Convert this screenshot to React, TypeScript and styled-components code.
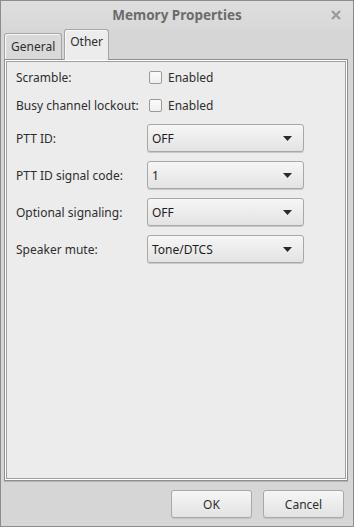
import React from 'react';
import styled, { createGlobalStyle } from 'styled-components';

const Global = createGlobalStyle`
	html, body {
		margin: 0;
		padding: 0;
		background: #d6d6d6;
	}
	body {
		font-family: 'Noto Sans', 'DejaVu Sans', sans-serif;
		font-size: 12px;
		color: #2e2e2e;
	}
`;

const Window = styled.div`
	box-sizing: border-box;
	width: 354px;
	height: 527px;
	border: 1px solid #8c8c8c;
	background: #d6d6d6;
	display: flex;
	flex-direction: column;
`;

const TitleBar = styled.div`
	height: 28px;
	position: relative;
	display: flex;
	align-items: center;
	justify-content: center;
	background: linear-gradient(#dedede, #d8d8d8);
	font-size: 13.5px;
	font-weight: bold;
	color: #6b6b6b;
`;

const Close = styled.span`
	position: absolute;
	right: 12px;
	top: 9px;
	display: flex;
`;

const Body = styled.div`
	flex: 1;
	display: flex;
	flex-direction: column;
	padding: 0 5px 0 3px;
`;

const Tabs = styled.div`
	display: flex;
	align-items: flex-end;
	gap: 2px;
	height: 30px;
`;

const Tab = styled.div<{ $active?: boolean }>`
	box-sizing: border-box;
	height: ${(p) => (p.$active ? '31px' : '26px')};
	padding: ${(p) => (p.$active ? '3px 5px 0' : '4px 6px 0')};
	border: 1px solid #a6a6a6;
	border-bottom: none;
	border-radius: 3px 3px 0 0;
	background: ${(p) => (p.$active ? '#ececec' : '#d9d9d9')};
	box-shadow: inset 1px 1px 0 #f8f8f8;
	font-size: 12px;
	color: #2e2e2e;
	margin-bottom: ${(p) => (p.$active ? '-1px' : '0')};
	position: relative;
	z-index: ${(p) => (p.$active ? 1 : 0)};
`;

const Panel = styled.div`
	box-sizing: border-box;
	height: 422px;
	border: 1px solid #8e8e8e;
	box-shadow: 0 1px 0 #b4b4b4;
	background: #fff;
	display: flex;
`;

const PanelInner = styled.div`
	flex: 1;
	margin: 1px;
	border: 1px solid #a0a0a0;
	background: #ececec;
	padding: 6px 10px 0 9px;
	display: grid;
	grid-template-columns: 131px 157px;
	grid-auto-rows: min-content;
	row-gap: 9px;
	align-content: start;
`;

const Label = styled.div<{ $h: number }>`
	height: ${(p) => p.$h}px;
	display: flex;
	align-items: center;
	white-space: nowrap;
`;

const CheckRow = styled.label`
	height: 19px;
	display: flex;
	align-items: center;
	gap: 6px;
	padding-left: 2px;
`;

const Box = styled.span`
	box-sizing: border-box;
	width: 13px;
	height: 13px;
	border: 1px solid #9a9a9a;
	border-radius: 2px;
	background: linear-gradient(#fbfbfb, #efefef);
`;

const Combo = styled.div`
	box-sizing: border-box;
	height: 28px;
	border: 1px solid #a8a8a8;
	border-radius: 3px;
	background: linear-gradient(#f6f6f6, #e3e3e3);
	box-shadow: 0 1px 0 #c8c8c8;
	display: flex;
	align-items: center;
	justify-content: space-between;
	padding: 0 11px 0 4px;
	color: #1e1e1e;
`;

const Footer = styled.div`
	flex: 1;
	display: flex;
	justify-content: flex-end;
	align-items: flex-start;
	gap: 11px;
	padding: 9px 4px 0 0;
`;

const Button = styled.button`
	box-sizing: border-box;
	width: 81px;
	height: 28px;
	border: 1px solid #a8a8a8;
	border-radius: 3px;
	background: linear-gradient(#f6f6f6, #e2e2e2);
	box-shadow: 0 1px 0 #c4c4c4;
	font-family: inherit;
	font-size: 12px;
	color: #2e2e2e;
	padding: 0;
`;

const Arrow = () => (
	<svg width="9" height="5" viewBox="0 0 9 5">
		<path d="M0 0h9L4.5 5z" fill="#2a2a2a" />
	</svg>
);

const rows: { label: string; kind: 'check' | 'combo'; value?: string }[] = [
	{ label: 'Scramble:', kind: 'check' },
	{ label: 'Busy channel lockout:', kind: 'check' },
	{ label: 'PTT ID:', kind: 'combo', value: 'OFF' },
	{ label: 'PTT ID signal code:', kind: 'combo', value: '1' },
	{ label: 'Optional signaling:', kind: 'combo', value: 'OFF' },
	{ label: 'Speaker mute:', kind: 'combo', value: 'Tone/DTCS' },
];

const App = () => (
	<>
		<Global />
		<Window>
			<TitleBar>
				Memory Properties
				<Close>
					<svg width="10" height="10" viewBox="0 0 10 10">
						<path d="M1 1l8 8M9 1l-8 8" stroke="#9a9a9a" strokeWidth="2.2" />
					</svg>
				</Close>
			</TitleBar>
			<Body>
				<Tabs>
					<Tab>General</Tab>
					<Tab $active>Other</Tab>
				</Tabs>
				<Panel>
					<PanelInner>
						{rows.map((r) => (
							<React.Fragment key={r.label}>
								<Label $h={r.kind === 'check' ? 19 : 28}>{r.label}</Label>
								{r.kind === 'check' ? (
									<CheckRow>
										<Box />
										Enabled
									</CheckRow>
								) : (
									<Combo>
										{r.value}
										<Arrow />
									</Combo>
								)}
							</React.Fragment>
						))}
					</PanelInner>
				</Panel>
				<Footer>
					<Button>OK</Button>
					<Button>Cancel</Button>
				</Footer>
			</Body>
		</Window>
	</>
);

export default App;
